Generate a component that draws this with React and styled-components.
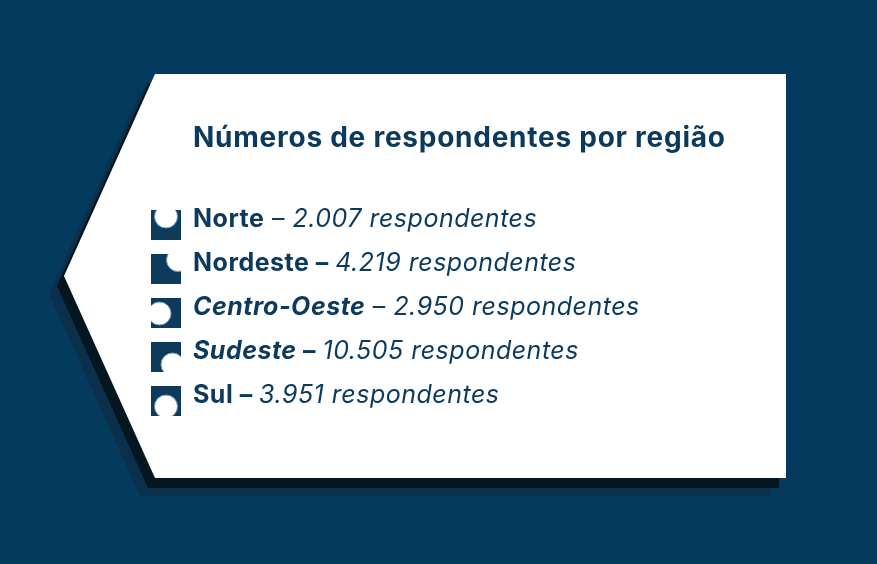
import React from "react";
import styled, { createGlobalStyle } from "styled-components";

const Global = createGlobalStyle`
  html, body { margin: 0; padding: 0; }
  body { background: #043a5e; font-family: Inter, "Noto Sans", "Liberation Sans", sans-serif; }
`;

const Page = styled.div`
  width: 877px;
  height: 564px;
  background: #043a5e;
  overflow: hidden;
  padding-top: 74px;
  box-sizing: border-box;
`;

const ShadowWrap = styled.div`
  margin-left: 64px;
  width: 722px;
  filter: drop-shadow(-7px 10px 0 #04161f) drop-shadow(-8px 8px 0 #0a304c);
`;

const Card = styled.div`
  width: 722px;
  height: 404px;
  box-sizing: border-box;
  background: #ffffff;
  clip-path: polygon(91px 0, 100% 0, 100% 100%, 91px 100%, 0 50%);
  padding: 49px 0 0 87px;
  display: flex;
  flex-direction: column;
  gap: 55px;
  color: #0b3a5e;
`;

const Title = styled.h1`
  margin: 0 0 0 42px;
  font-size: 28px;
  line-height: 28px;
  font-weight: 700;
  letter-spacing: 0.75px;
  white-space: nowrap;
`;

const List = styled.ul`
  list-style: none;
  margin: 0;
  padding: 0;
  display: flex;
  flex-direction: column;
  gap: 10px;
`;

const Row = styled.li`
  display: flex;
  align-items: flex-start;
  gap: 12px;
  font-size: 25px;
  line-height: 25px;
  letter-spacing: 0.5px;
  white-space: nowrap;
`;

const IconBox = styled.svg`
  flex: none;
  width: 30px;
  height: 30px;
  margin-top: 4px;
  display: block;
`;

const Name = styled.span`
  font-weight: 700;
  font-style: ${(p) => (p.$italic ? "italic" : "normal")};
`;

const Dash = styled.span`
  font-weight: ${(p) => (p.$bold ? 700 : 400)};
  font-style: normal;
`;

const Count = styled.span`
  font-style: italic;
  font-weight: 400;
`;

function Icon({ cx, cy }) {
  return (
    <IconBox viewBox="0 0 30 30">
      <rect x="0" y="0" width="30" height="30" fill="#0e3a5c" />
      <circle cx={cx} cy={cy} r="11.5" fill="#ffffff" stroke="#7098b8" strokeWidth="1" />
    </IconBox>
  );
}

const rows = [
  { name: "Norte", italic: false, boldDash: false, count: "2.007 respondentes", cx: 15, cy: 6.5 },
  { name: "Nordeste", italic: false, boldDash: true, count: "4.219 respondentes", cx: 27, cy: 6 },
  { name: "Centro-Oeste", italic: true, boldDash: false, count: "2.950 respondentes", cx: 8.5, cy: 15.5 },
  { name: "Sudeste", italic: true, boldDash: true, count: "10.505 respondentes", cx: 21.5, cy: 22.5 },
  { name: "Sul", italic: false, boldDash: true, count: "3.951 respondentes", cx: 15, cy: 20.5 },
];

export default function App() {
  return (
    <>
      <Global />
      <Page>
        <ShadowWrap>
          <Card>
            <Title>Números de respondentes por região</Title>
            <List>
              {rows.map((r) => (
                <Row key={r.name}>
                  <Icon cx={r.cx} cy={r.cy} />
                  <span>
                    <Name $italic={r.italic}>{r.name}</Name>
                    <Dash $bold={r.boldDash}> – </Dash>
                    <Count>{r.count}</Count>
                  </span>
                </Row>
              ))}
            </List>
          </Card>
        </ShadowWrap>
      </Page>
    </>
  );
}
